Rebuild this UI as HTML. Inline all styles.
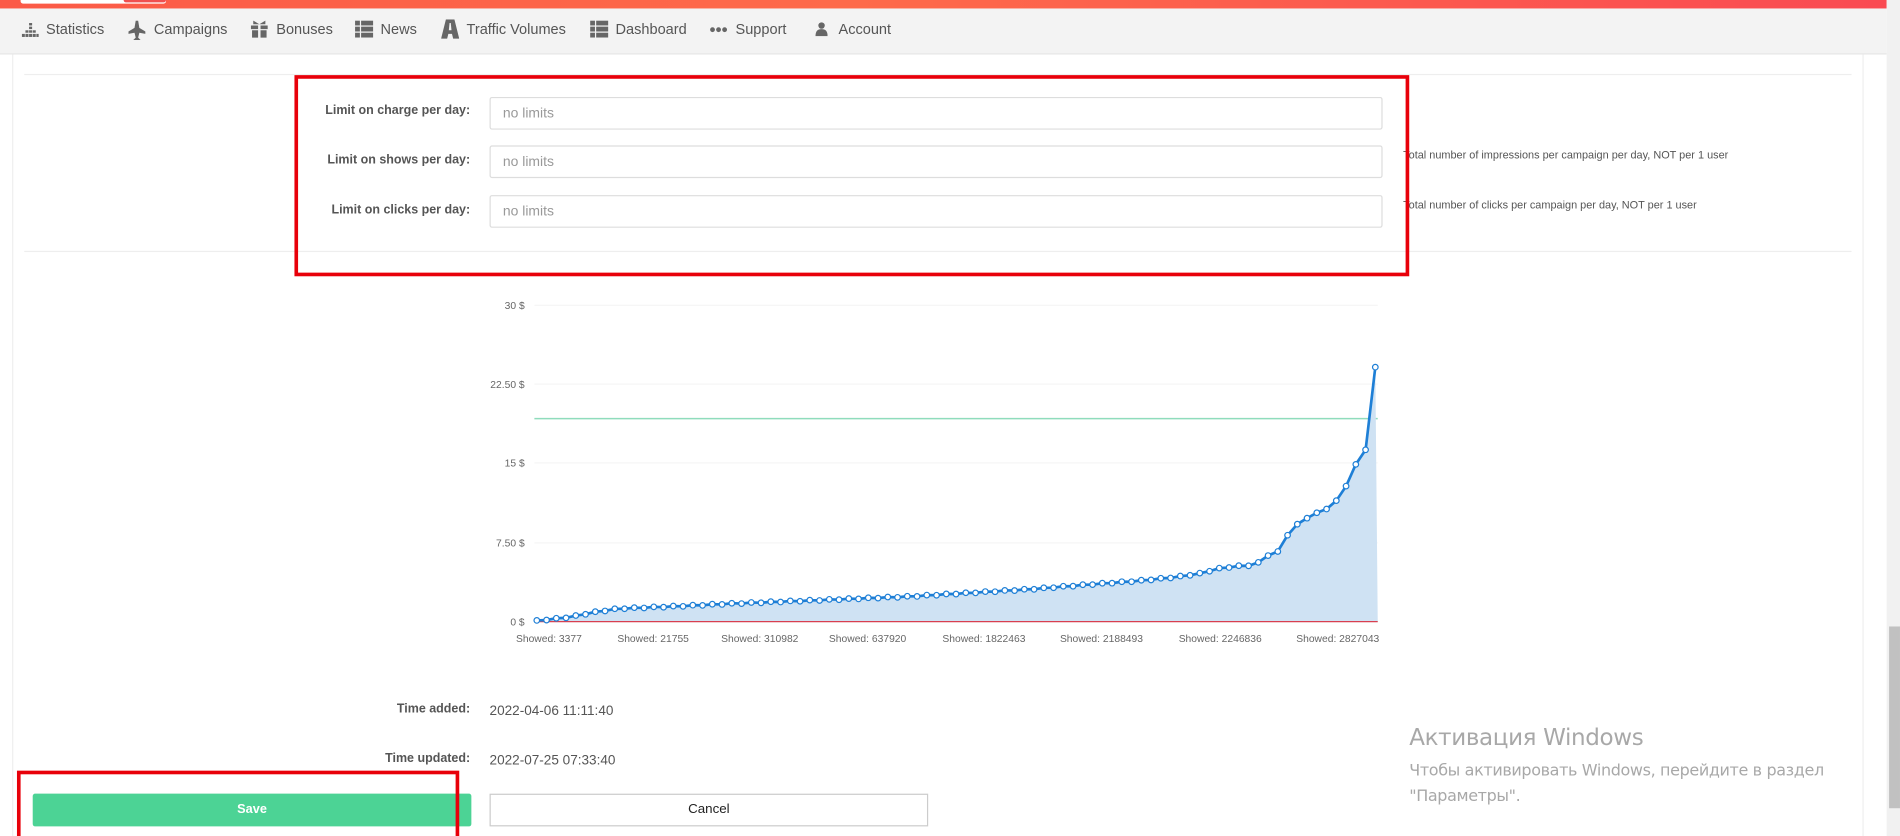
<!DOCTYPE html>
<html><head><meta charset="utf-8"><style>
html,body{margin:0;padding:0;width:1900px;height:836px;overflow:hidden;background:#fff}
#w{position:absolute;left:0;top:0;width:1568px;height:690px;overflow:hidden;transform:scale(1.21173);transform-origin:0 0;font-family:"Liberation Sans",sans-serif;color:#555}
.a{position:absolute}
.nav span{position:absolute;top:17px;font-size:12px;color:#555;white-space:nowrap}
.lbl{position:absolute;right:1180px;font-size:10.3px;font-weight:bold;color:#555;white-space:nowrap}
.inp{position:absolute;left:404px;width:737px;height:27px;border:1px solid #ddd;border-radius:2px;background:#fff;font-size:11.5px;color:#999;line-height:27px;text-indent:10px;box-sizing:border-box}
.help{position:absolute;left:1158px;font-size:9px;color:#555;white-space:nowrap}
.yl{position:absolute;right:1135px;font-size:8.5px;color:#666}
.xl{position:absolute;top:522px;font-size:8.5px;color:#666;white-space:nowrap;transform:translateX(-50%)}
</style></head><body><div id="w">
<div class="a" style="left:0;top:0;width:1557px;height:6.6px;background:linear-gradient(90deg,#fb5a47,#fe6a4a 45%,#fa4a52)"></div>
<div class="a" style="left:17px;top:-4px;width:120px;height:7px;background:#fff;border-radius:2px"></div>
<div class="a" style="left:102px;top:-4px;width:35px;height:6px;background:#f05050;border-radius:2px"></div>
<div class="a" style="left:0;top:6.6px;width:1557px;height:37.5px;background:#f3f3f3;border-bottom:1px solid #e6e6e6"></div>
<div class="a" style="left:1557px;top:0;width:11px;height:690px;background:#f1f1f1"></div>
<div class="a" style="left:1559px;top:517px;width:9px;height:150px;background:#c1c1c1"></div>
<div class="a" style="left:10px;top:45px;width:1px;height:645px;background:#eee"></div>
<div class="a" style="left:1537px;top:45px;width:1px;height:645px;background:#eee"></div>
<div class="nav">
<svg class="a" style="left:18px;top:18px" width="14" height="14" viewBox="0 0 14 14" fill="#666"><rect x="6" y="1" width="2.5" height="2"/><rect x="6" y="4" width="2.5" height="2"/><rect x="3" y="7" width="2.5" height="2"/><rect x="6" y="7" width="2.5" height="2"/><rect x="9" y="7" width="2.5" height="2"/><rect x="0" y="10" width="2.5" height="2.5"/><rect x="3" y="10" width="2.5" height="2.5"/><rect x="6" y="10" width="2.5" height="2.5"/><rect x="9" y="10" width="2.5" height="2.5"/><rect x="12" y="10" width="2" height="2.5"/></svg>
<span style="left:38px">Statistics</span>
<svg class="a" style="left:106px;top:17px" width="14" height="16" viewBox="0 0 14 16" fill="#666"><path d="M6 0h2l1 6 5 3v2l-5-1-1 4 2 2H4l2-2-1-4-5 1V9l5-3z"/></svg>
<span style="left:127px">Campaigns</span>
<svg class="a" style="left:207px;top:16px" width="14" height="16" viewBox="0 0 14 16" fill="#666"><path d="M2 1l5 3 5-3v3H0V4h2zM0 5h6v3H0zM8 5h6v3H8zM1 9h5v6H1zM8 9h5v6H8z"/></svg>
<span style="left:228px">Bonuses</span>
<svg class="a" style="left:293px;top:17px" width="15" height="14" viewBox="0 0 15 14" fill="#666"><rect x="0" y="0" width="4" height="4"/><rect x="5" y="0" width="10" height="4"/><rect x="0" y="5" width="4" height="4"/><rect x="5" y="5" width="10" height="4"/><rect x="0" y="10" width="4" height="4"/><rect x="5" y="10" width="10" height="4"/></svg>
<span style="left:314px">News</span>
<svg class="a" style="left:364px;top:16px" width="15" height="16" viewBox="0 0 15 16" fill="#666"><path d="M4 0h7l4 16h-5l-1-4H6l-1 4H0zM7 3l-.6 6h2.2L8 3z"/></svg>
<span style="left:385px">Traffic Volumes</span>
<svg class="a" style="left:487px;top:17px" width="15" height="14" viewBox="0 0 15 14" fill="#666"><rect x="0" y="0" width="4" height="4"/><rect x="5" y="0" width="10" height="4"/><rect x="0" y="5" width="4" height="4"/><rect x="5" y="5" width="10" height="4"/><rect x="0" y="10" width="4" height="4"/><rect x="5" y="10" width="10" height="4"/></svg>
<span style="left:508px">Dashboard</span>
<svg class="a" style="left:586px;top:22px" width="14" height="5" viewBox="0 0 14 5" fill="#666"><circle cx="2" cy="2.5" r="2"/><circle cx="7" cy="2.5" r="2"/><circle cx="12" cy="2.5" r="2"/></svg>
<span style="left:607px">Support</span>
<svg class="a" style="left:673px;top:18px" width="10" height="12" viewBox="0 0 12 14" fill="#666"><circle cx="6" cy="3.5" r="3.2"/><path d="M0 14c0-5 2-7 6-7s6 2 6 7z"/></svg>
<span style="left:692px">Account</span>
</div>
<div class="a" style="left:20px;top:61px;width:1508px;height:1px;background:#eee"></div>
<div class="a" style="left:20px;top:207px;width:1508px;height:1px;background:#eee"></div>
<div class="lbl" style="top:86px">Limit on charge per day:</div>
<div class="lbl" style="top:127px">Limit on shows per day:</div>
<div class="lbl" style="top:168px">Limit on clicks per day:</div>
<div class="inp" style="top:80px">no limits</div>
<div class="inp" style="top:120px">no limits</div>
<div class="inp" style="top:161px">no limits</div>
<div class="help" style="top:123px">Total number of impressions per campaign per day, NOT per 1 user</div>
<div class="help" style="top:164px">Total number of clicks per campaign per day, NOT per 1 user</div>
<div class="a" style="left:243px;top:62px;width:914px;height:160px;border:3px solid #e8000a"></div>
<div class="yl" style="top:247px">30 $</div>
<div class="yl" style="top:312px">22.50 $</div>
<div class="yl" style="top:377px">15 $</div>
<div class="yl" style="top:443px">7.50 $</div>
<div class="yl" style="top:508px">0 $</div>
<svg class="a" style="left:0;top:0" width="1568" height="690">
<g stroke="#f6f6f6" stroke-width="1"><line x1="441" y1="252" x2="1137" y2="252"/><line x1="441" y1="317" x2="1137" y2="317"/><line x1="441" y1="382" x2="1137" y2="382"/><line x1="441" y1="448" x2="1137" y2="448"/></g>
<line x1="441" y1="345.5" x2="1137" y2="345.5" stroke="#8fdcbc" stroke-width="1.2"/>
<path id="fill" fill="#cfe2f3"/>
<line x1="441" y1="513" x2="1137" y2="513" stroke="#d84050" stroke-width="1"/>
<path id="ln" fill="none" stroke="#1e7fd6" stroke-width="2.2" stroke-linejoin="round"/>
<g id="mk" fill="#fff" stroke="#1e7fd6" stroke-width="1"></g>
</svg>
<div class="xl" style="left:453px">Showed: 3377</div>
<div class="xl" style="left:539px">Showed: 21755</div>
<div class="xl" style="left:627px">Showed: 310982</div>
<div class="xl" style="left:716px">Showed: 637920</div>
<div class="xl" style="left:812px">Showed: 1822463</div>
<div class="xl" style="left:909px">Showed: 2188493</div>
<div class="xl" style="left:1007px">Showed: 2246836</div>
<div class="xl" style="left:1104px">Showed: 2827043</div>
<div class="lbl" style="top:580px">Time added:</div>
<div class="a" style="left:404px;top:581px;font-size:11.2px;color:#555">2022-04-06 11:11:40</div>
<div class="lbl" style="top:621px">Time updated:</div>
<div class="a" style="left:404px;top:622px;font-size:11.2px;color:#555">2022-07-25 07:33:40</div>
<div class="a" style="left:27px;top:655px;width:362px;height:27px;background:#4cd395;border-radius:2px;color:#fff;font-size:10.5px;font-weight:bold;text-align:center;line-height:27px">Save</div>
<div class="a" style="left:404px;top:655px;width:362px;height:27px;box-sizing:border-box;border:1px solid #ccc;background:#fff;color:#222;font-size:11px;text-align:center;line-height:25px">Cancel</div>
<div class="a" style="left:14px;top:636px;width:359px;height:60px;border:3px solid #e8000a"></div>
<div class="a" style="left:1163px;top:598px;font-size:19px;color:#a8a8a8;font-family:'DejaVu Sans','Liberation Sans',sans-serif;white-space:nowrap;letter-spacing:-0.3px">Активация Windows</div>
<div class="a" style="left:1163px;top:626px;font-size:13.2px;color:#a8a8a8;line-height:21px;font-family:'DejaVu Sans','Liberation Sans',sans-serif;white-space:nowrap;letter-spacing:-0.3px">Чтобы активировать Windows, перейдите в раздел<br>"Параметры".</div>
<script>
var K=[[443,512],[470,509],[490,505],[510,502],[560,500],[600,498],[650,496],[700,494],[750,492],[800,489],[850,486],[900,482],[940,479],[970,476],[990,473],[1005,469],[1020,467],[1036,466],[1045,459],[1054,456],[1063,441],[1070,433],[1078,428],[1087,423],[1095,420],[1103,413],[1110,403],[1117,388],[1121,378],[1128,370],[1135,303]];
function f(x){for(var i=0;i<K.length-1;i++){if(x<=K[i+1][0]){var a=K[i],b=K[i+1];return a[1]+(b[1]-a[1])*(x-a[0])/(b[0]-a[0]);}}return K[K.length-1][1];}
var pts=[],n=86;for(var i=0;i<=n;i++){var x=443+(1135-443)*i/n;var y=f(x);if(i%2==1&&x<1040)y+=0.6;pts.push([x,y]);}
var d='M'+pts.map(function(p){return p[0].toFixed(1)+' '+p[1].toFixed(1)}).join(' L');
document.getElementById('ln').setAttribute('d',d);
document.getElementById('fill').setAttribute('d',d+' L1137 513 L441 513 Z');
var g=document.getElementById('mk'),s='';pts.forEach(function(p){s+='<circle cx="'+p[0]+'" cy="'+p[1]+'" r="2.3"/>'});g.innerHTML=s;
</script>
</div></body></html>
